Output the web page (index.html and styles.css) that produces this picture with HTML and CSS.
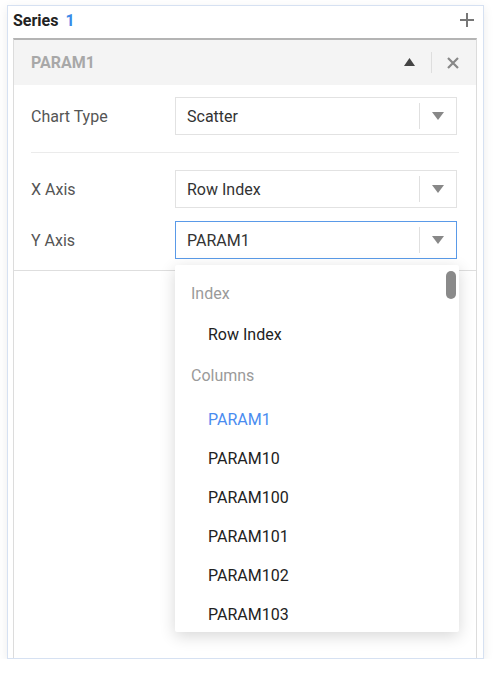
FILE: index.html
```
<!DOCTYPE html>
<html>
<head>
<meta charset="utf-8">
<link rel="stylesheet" href="styles.css">
</head>
<body>
<div class="outer">
  <div class="series-head">
    <span class="series-title">Series <span class="count">1</span></span>
    <svg class="plus" width="14" height="14" viewBox="0 0 14 14"><path d="M7 0v14M0 7h14" stroke="#777" stroke-width="2"/></svg>
  </div>
  <div class="panel">
    <div class="panel-head">
      <span class="panel-name">PARAM1</span>
      <div class="panel-tools">
        <svg class="up" width="11" height="8" viewBox="0 0 11 8"><path d="M5.5 0L11 8H0z" fill="#444"/></svg>
        <span class="vsep"></span>
        <svg class="close" width="12" height="12" viewBox="0 0 12 12"><path d="M1 1L11 11M11 1L1 11" stroke="#888" stroke-width="2.2"/></svg>
      </div>
    </div>
    <div class="panel-body">
      <div class="row">
        <label class="lbl">Chart Type</label>
        <div class="select"><span class="val">Scatter</span><span class="sdiv"></span><span class="caret"></span></div>
      </div>
      <div class="hsep"></div>
      <div class="row row-x">
        <label class="lbl">X Axis</label>
        <div class="select"><span class="val">Row Index</span><span class="sdiv"></span><span class="caret"></span></div>
      </div>
      <div class="row row-y">
        <label class="lbl">Y Axis</label>
        <div class="select focus"><span class="val">PARAM1</span><span class="sdiv"></span><span class="caret"></span></div>
      </div>
    </div>
    <div class="menu">
      <div class="grp">Index</div>
      <div class="opt">Row Index</div>
      <div class="grp cols">Columns</div>
      <div class="opt sel">PARAM1</div>
      <div class="opt">PARAM10</div>
      <div class="opt">PARAM100</div>
      <div class="opt">PARAM101</div>
      <div class="opt">PARAM102</div>
      <div class="opt">PARAM103</div>
      <div class="thumb"></div>
    </div>
  </div>
</div>
</body>
</html>
```
FILE: styles.css
```
html, body { margin: 0; padding: 0; background: #fff; }
body { font-family: Roboto, "Liberation Sans", sans-serif; }
.outer {
  margin: 5px 0 0 7px;
  width: 475px;
  height: 652px;
  border: 1px solid #d6e1f2;
  box-shadow: 0 3px 10px rgba(0,0,0,0.08);
  display: flex;
  flex-direction: column;
  background: #fff;
}
.series-head {
  height: 28px;
  padding: 0 11px 4px 5px;
  display: flex;
  align-items: center;
  justify-content: space-between;
}
.series-title { font-weight: bold; font-size: 16px; color: #222; }
.series-title .count { color: #3b8be8; margin-left: 3px; }
.plus { margin-right: -2px; }
.panel {
  margin-left: 5px;
  width: 462px;
  flex: 1;
  border-top: 2px solid #b4b4b4;
  border-left: 1px solid #dcdcdc;
  border-right: 1px solid #dcdcdc;
  position: relative;
}
.panel-head {
  height: 45px;
  background: #f4f4f4;
  display: flex;
  align-items: center;
  justify-content: space-between;
  padding: 0 17px 0 17px;
}
.panel-name { font-weight: bold; font-size: 16px; color: #a8a8a8; }
.panel-tools { display: flex; align-items: center; }
.up { margin-right: 16px; margin-top: -1px; }
.vsep { width: 1px; height: 21px; background: #dedede; margin-right: 15px; }
.panel-body {
  padding: 12px 17px 11px 17px;
  border-bottom: 1px solid #dedede;
}
.row { display: flex; align-items: center; }
.lbl { width: 144px; font-size: 16px; color: #555; }
.select {
  width: 282px;
  border: 1px solid #e2e2e2;
  display: flex;
  align-items: center;
  box-sizing: border-box;
  height: 38px;
}
.select.focus { border-color: #5a9ae8; }
.val { flex: 1; padding-left: 11px; font-size: 16px; color: #333; }
.sdiv { width: 1px; height: 26px; background: #e0e0e0; }
.caret {
  width: 0; height: 0;
  border-left: 6px solid transparent;
  border-right: 6px solid transparent;
  border-top: 8px solid #888;
  margin: 0 12px 0 12px;
}
.hsep { height: 1px; background: #ebebeb; margin: 17px 0 17px 0; }
.row-y { margin-top: 13px; }
.menu {
  position: absolute;
  left: 161px;
  top: 225px;
  width: 284px;
  height: 367px;
  background: #fff;
  box-shadow: 0 4px 16px rgba(0,0,0,0.16);
  border-radius: 2px;
  padding-top: 7px;
  box-sizing: border-box;
  overflow: hidden;
}
.grp { height: 43px; line-height: 43px; padding-left: 16px; font-size: 16px; color: #9a9a9a; }
.grp.cols { padding-bottom: 3px; }
.opt { height: 39px; line-height: 39px; padding-left: 33px; font-size: 16px; color: #222; }
.opt.sel { color: #4a8cf0; }
.thumb {
  position: absolute;
  right: 3px;
  top: 6px;
  width: 10px;
  height: 28px;
  border-radius: 5px;
  background: #8a8a8a;
}
```
